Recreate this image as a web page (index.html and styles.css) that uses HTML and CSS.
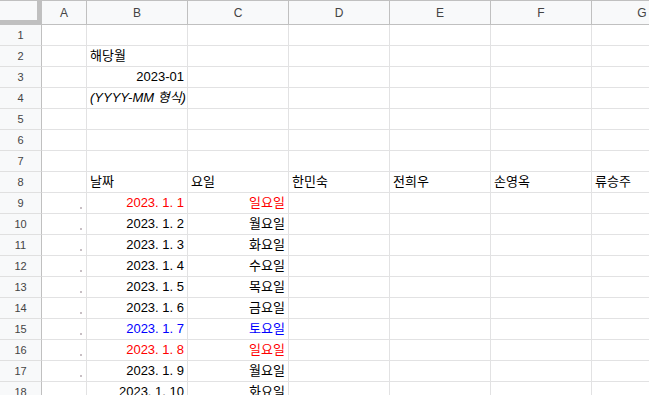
FILE: index.html
```html
<!DOCTYPE html>
<html lang="ko">
<head>
  <meta charset="UTF-8" />
  <title>해당월 근무표</title>
  <link rel="stylesheet" href="styles.css">
</head>
<body>

  <!-- Spreadsheet grid -->
  <div class="sheet">
    <!-- column headers -->
    <div class="corner"></div>
    <div class="col-head">A</div>
    <div class="col-head">B</div>
    <div class="col-head">C</div>
    <div class="col-head">D</div>
    <div class="col-head">E</div>
    <div class="col-head">F</div>
    <div class="col-head">G</div>

    <div class="row-head">1</div>
    <div class="cell"></div><div class="cell"></div><div class="cell"></div><div class="cell"></div><div class="cell"></div><div class="cell"></div><div class="cell"></div>

    <div class="row-head">2</div>
    <div class="cell"></div><div class="cell">해당월</div><div class="cell"></div><div class="cell"></div><div class="cell"></div><div class="cell"></div><div class="cell"></div>

    <div class="row-head">3</div>
    <div class="cell"></div><div class="cell right">2023-01</div><div class="cell"></div><div class="cell"></div><div class="cell"></div><div class="cell"></div><div class="cell"></div>

    <div class="row-head">4</div>
    <div class="cell"></div><div class="cell note">(YYYY-MM 형식)</div><div class="cell"></div><div class="cell"></div><div class="cell"></div><div class="cell"></div><div class="cell"></div>

    <div class="row-head">5</div>
    <div class="cell"></div><div class="cell"></div><div class="cell"></div><div class="cell"></div><div class="cell"></div><div class="cell"></div><div class="cell"></div>

    <div class="row-head">6</div>
    <div class="cell"></div><div class="cell"></div><div class="cell"></div><div class="cell"></div><div class="cell"></div><div class="cell"></div><div class="cell"></div>

    <div class="row-head">7</div>
    <div class="cell"></div><div class="cell"></div><div class="cell"></div><div class="cell"></div><div class="cell"></div><div class="cell"></div><div class="cell"></div>

    <div class="row-head">8</div>
    <div class="cell"></div><div class="cell">날짜</div><div class="cell">요일</div><div class="cell">한민숙</div><div class="cell">전희우</div><div class="cell">손영옥</div><div class="cell">류승주</div>

    <div class="row-head">9</div>
    <div class="cell mark"><span class="dot"></span></div><div class="cell right sun">2023. 1. 1</div><div class="cell right sun">일요일</div><div class="cell"></div><div class="cell"></div><div class="cell"></div><div class="cell"></div>

    <div class="row-head">10</div>
    <div class="cell mark"><span class="dot"></span></div><div class="cell right">2023. 1. 2</div><div class="cell right">월요일</div><div class="cell"></div><div class="cell"></div><div class="cell"></div><div class="cell"></div>

    <div class="row-head">11</div>
    <div class="cell mark"><span class="dot"></span></div><div class="cell right">2023. 1. 3</div><div class="cell right">화요일</div><div class="cell"></div><div class="cell"></div><div class="cell"></div><div class="cell"></div>

    <div class="row-head">12</div>
    <div class="cell mark"><span class="dot"></span></div><div class="cell right">2023. 1. 4</div><div class="cell right">수요일</div><div class="cell"></div><div class="cell"></div><div class="cell"></div><div class="cell"></div>

    <div class="row-head">13</div>
    <div class="cell mark"><span class="dot"></span></div><div class="cell right">2023. 1. 5</div><div class="cell right">목요일</div><div class="cell"></div><div class="cell"></div><div class="cell"></div><div class="cell"></div>

    <div class="row-head">14</div>
    <div class="cell mark"><span class="dot"></span></div><div class="cell right">2023. 1. 6</div><div class="cell right">금요일</div><div class="cell"></div><div class="cell"></div><div class="cell"></div><div class="cell"></div>

    <div class="row-head">15</div>
    <div class="cell mark"><span class="dot"></span></div><div class="cell right sat">2023. 1. 7</div><div class="cell right sat">토요일</div><div class="cell"></div><div class="cell"></div><div class="cell"></div><div class="cell"></div>

    <div class="row-head">16</div>
    <div class="cell mark"><span class="dot"></span></div><div class="cell right sun">2023. 1. 8</div><div class="cell right sun">일요일</div><div class="cell"></div><div class="cell"></div><div class="cell"></div><div class="cell"></div>

    <div class="row-head">17</div>
    <div class="cell mark"><span class="dot"></span></div><div class="cell right">2023. 1. 9</div><div class="cell right">월요일</div><div class="cell"></div><div class="cell"></div><div class="cell"></div><div class="cell"></div>

    <div class="row-head">18</div>
    <div class="cell mark"><span class="dot"></span></div><div class="cell right">2023. 1. 10</div><div class="cell right">화요일</div><div class="cell"></div><div class="cell"></div><div class="cell"></div><div class="cell"></div>
  </div>

</body>
</html>
```

FILE: styles.css
```css
* { box-sizing: border-box; }

body {
  margin: 0;
  background: #fff;
  overflow: hidden;
  font-family: 'Liberation Sans', Arial, 'Noto Sans CJK KR', sans-serif;
  color: #000;
}

.sheet {
  display: grid;
  grid-template-columns: 42px 45px repeat(6, 101px);
  grid-template-rows: 25px;
  grid-auto-rows: 21px;
  width: 693px;
}

.corner {
  background: #f8f9fa;
  border-top: 1px solid #c0c0c0;
  border-right: 5px solid #c0c0c0;
  border-bottom: 5px solid #c0c0c0;
}

.col-head {
  background: #f8f9fa;
  border-top: 1px solid #c0c0c0;
  border-right: 1px solid #c0c0c0;
  border-bottom: 1px solid #c0c0c0;
  color: #444;
  font-family: 'Liberation Sans', Arial, sans-serif;
  font-size: 12px;
  display: flex;
  align-items: center;
  justify-content: center;
}

.row-head {
  background: #f8f9fa;
  border-right: 1px solid #c0c0c0;
  border-bottom: 1px solid #e0e0e0;
  color: #444;
  font-family: 'Liberation Sans', Arial, sans-serif;
  font-size: 11px;
  display: flex;
  align-items: center;
  justify-content: center;
}

.cell {
  border-right: 1px solid #e2e2e3;
  border-bottom: 1px solid #e2e2e3;
  font-size: 13px;
  line-height: 20px;
  padding: 0 3px;
  white-space: nowrap;
  overflow: hidden;
}

.right { text-align: right; }

.note { font-style: italic; }

.sun { color: #ff0000; }
.sat { color: #0000ff; }

.mark {
  display: flex;
  justify-content: flex-end;
  align-items: flex-end;
  padding: 0 4px 4px 0;
}

.dot {
  width: 2px;
  height: 2px;
  background: #c8bfc4;
}
```
